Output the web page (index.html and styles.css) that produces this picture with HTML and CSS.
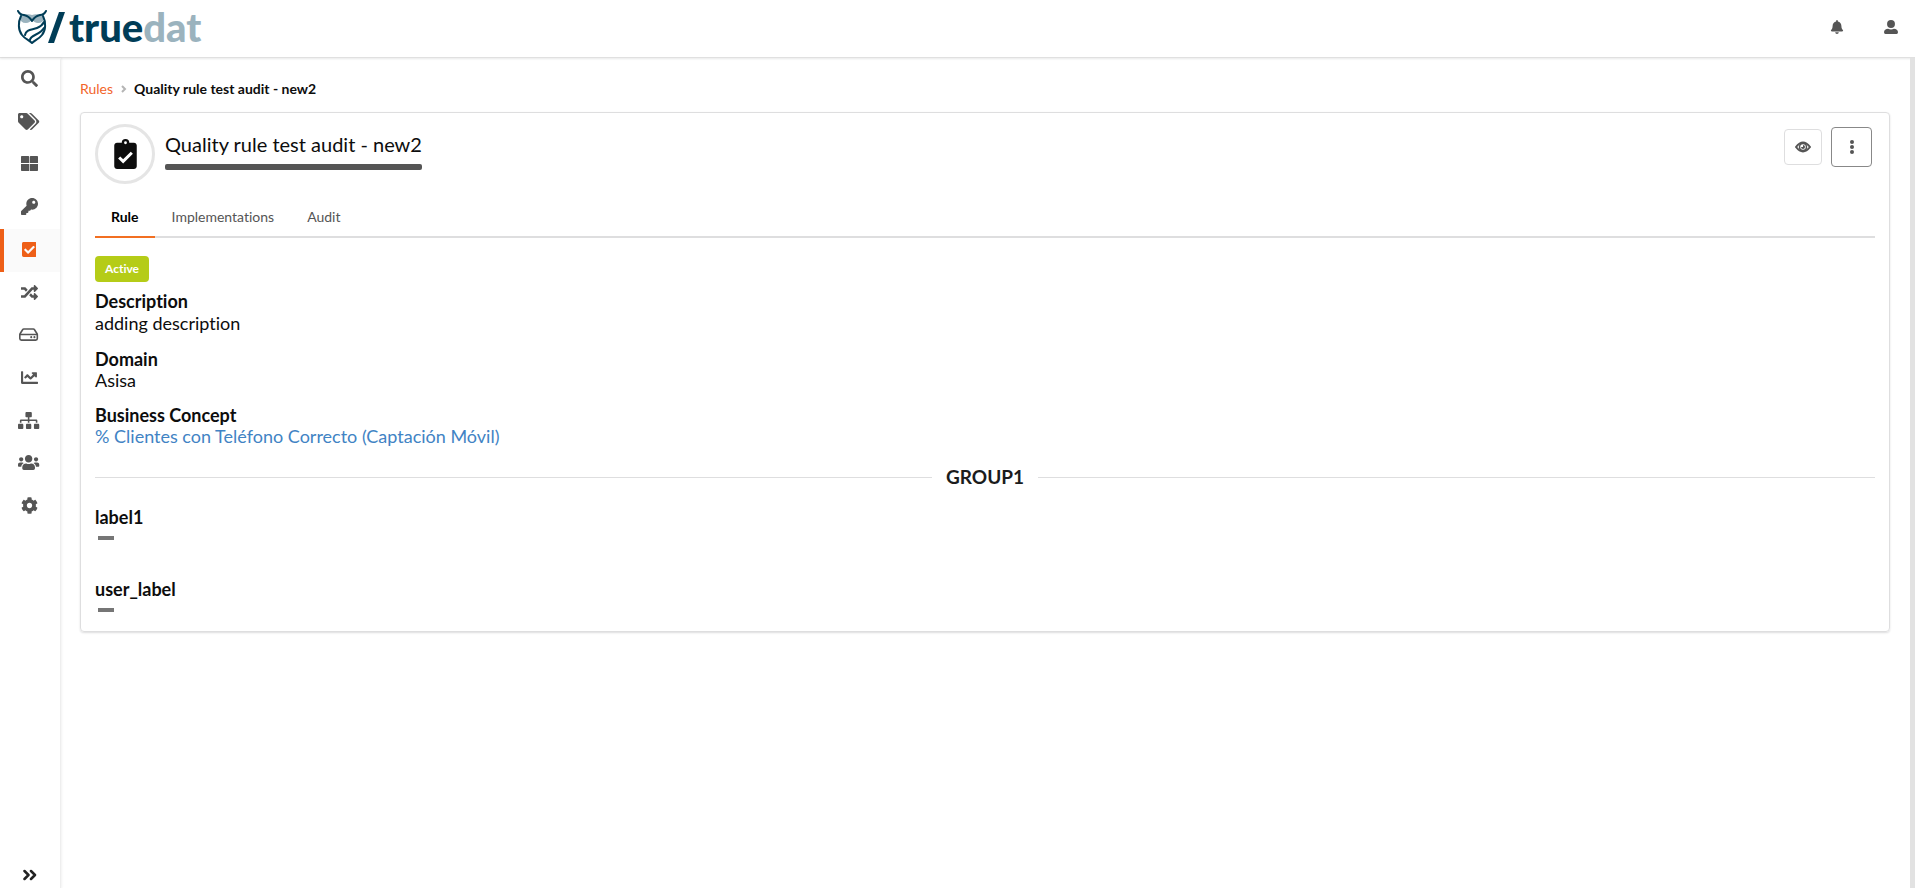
FILE: index.html
```html
<!DOCTYPE html>
<html lang="en">
<head>
    <meta charset="utf-8">
    <title>Quality rule test audit - new2</title>
    <link rel="stylesheet" href="styles.css">
</head>
<body>

<header class="topbar">
  <a class="logo" href="#" aria-label="truedat">
    <svg class="owl" viewBox="0 0 50 36" aria-hidden="true">
      <path d="M4 8Q10 4 16 6Q22 4 28 8Q28 14 22 14Q18 14 16 10Q14 14 10 14Q4 14 4 8Z" fill="#9bb3be"/>
      <g fill="none" stroke="#003d57" stroke-width="2" stroke-linecap="round" stroke-linejoin="round">
        <path d="M2 2Q4 6 8 6Q13 7 16 12Q19 7 24 6Q28 6 30 2"/>
        <path d="M5 7C2 13 2 21 6 26C9 30 13 31 16 34C19 31 23 30 26 26C30 21 30 13 27 7"/>
        <path d="M9 26C10 20 16 21 21 19Q26 17 28 13"/>
        <path d="M14 31C14 26 24 26 28 19"/>
      </g>
      <path d="M43 3h6L38 34h-6z" fill="#003d57"/>
    </svg>
    <span class="word">true<span class="word-light">dat</span></span>
  </a>
  <nav class="user-menu">
    <button type="button" aria-label="Notifications"><svg viewBox="0 0 448 512"><path d="M224 512c35.320 0 63.970-28.650 63.970-64H160.030c0 35.350 28.650 64 63.970 64zm215.390-149.710c-19.320-20.760-55.470-51.990-55.470-154.290 0-77.700-54.480-139.900-127.940-155.160V32c0-17.670-14.320-32-31.980-32s-31.980 14.330-31.980 32v20.840C118.560 68.100 64.080 130.300 64.080 208c0 102.300-36.150 133.530-55.470 154.290-6 6.450-8.660 14.160-8.610 21.710.11 16.400 12.980 32 32.100 32h383.800c19.120 0 32-15.600 32.100-32 .05-7.550-2.610-15.270-8.610-21.710z"/></svg></button>
    <button type="button" aria-label="User"><svg viewBox="0 0 512 512"><circle cx="256" cy="144" r="144"/><path d="M148 320q108 60 216 0c80 0 148 50 148 130q0 62-52 62H52q-52 0-52-62c0-80 68-130 148-130z"/></svg></button>
  </nav>
</header>

<div class="layout">
  <aside class="sidebar">
    <ul class="side-menu">
      <li><a href="#" aria-label="Search"><svg viewBox="0 0 512 512"><path d="M505 442.700L405.300 343c-4.500-4.500-10.600-7-17-7H372c27.600-35.300 44-79.700 44-128C416 93.100 322.900 0 208 0S0 93.100 0 208s93.100 208 208 208c48.300 0 92.700-16.400 128-44v16.300c0 6.400 2.500 12.500 7 17l99.700 99.700c9.400 9.400 24.600 9.400 33.900 0l28.300-28.300c9.400-9.400 9.400-24.600.1-34zM208 336c-70.700 0-128-57.200-128-128 0-70.700 57.200-128 128-128 70.700 0 128 57.200 128 128 0 70.700-57.200 128-128 128z"/></svg></a></li>
      <li><a href="#" aria-label="Concepts"><svg viewBox="0 0 640 512"><path d="M497.941 225.941L286.059 14.059A48 48 0 0 0 252.118 0H48C21.490 0 0 21.490 0 48v204.118a48 48 0 0 0 14.059 33.941l211.882 211.882c18.744 18.745 49.136 18.746 67.882 0l204.118-204.118c18.745-18.745 18.745-49.137 0-67.882zM112 160c-26.510 0-48-21.490-48-48s21.490-48 48-48 48 21.490 48 48-21.490 48-48 48zm513.941 133.823L421.823 497.941c-18.745 18.745-49.137 18.745-67.882 0l-.36-.36L527.640 323.522c16.999-16.999 26.360-39.600 26.360-63.640s-9.362-46.641-26.360-63.640L331.397 0h48.721a48 48 0 0 1 33.941 14.059l211.882 211.882c18.745 18.745 18.745 49.137 0 67.882z"/></svg></a></li>
      <li><a href="#" aria-label="Catalog"><svg viewBox="0 0 512 512"><path d="M24 32h198q24 0 24 24v184H0V56q0-24 24-24zm266 0h198q24 0 24 24v184H266V56q0-24 24-24zM0 272h246v208H24q-24 0-24-24zm266 0h246v184q0 24-24 24H266z"/></svg></a></li>
      <li><a href="#" aria-label="Permissions"><svg viewBox="0 0 512 512"><path d="M512 176.001C512 273.203 433.202 352 336 352c-11.220 0-22.190-1.062-32.827-3.069l-24.012 27.014A23.999 23.999 0 0 1 261.223 384H224v40c0 13.255-10.745 24-24 24h-40v40c0 13.255-10.745 24-24 24H24c-13.255 0-24-10.745-24-24v-78.059c0-6.365 2.529-12.470 7.029-16.971l161.802-161.802C163.108 213.814 160 195.271 160 176 160 78.798 238.797.001 335.999 0 433.488-.001 512 78.511 512 176.001zM336 128c0 26.510 21.490 48 48 48s48-21.490 48-48-21.490-48-48-48-48 21.490-48 48z"/></svg></a></li>
      <li class="active"><a href="#" aria-label="Rules"><svg viewBox="0 0 448 512"><path d="M400 480H48c-26.510 0-48-21.490-48-48V80c0-26.510 21.490-48 48-48h352c26.510 0 48 21.490 48 48v352c0 26.510-21.490 48-48 48zm-204.686-98.059l184-184c6.248-6.248 6.248-16.379 0-22.627l-22.627-22.627c-6.248-6.248-16.379-6.249-22.628 0L184 302.745l-70.059-70.059c-6.248-6.248-16.379-6.248-22.628 0l-22.627 22.627c-6.248 6.248-6.248 16.379 0 22.627l104 104c6.249 6.250 16.379 6.250 22.628.001z"/></svg></a></li>
      <li><a href="#" aria-label="Lineage"><svg viewBox="0 0 512 512"><path d="M504.971 359.029c9.373 9.373 9.373 24.569 0 33.941l-80 79.984c-15.010 15.010-40.971 4.490-40.971-16.971V416h-58.785a12.004 12.004 0 0 1-8.773-3.812l-70.556-75.596 53.333-57.143L352 336h32v-39.981c0-21.438 25.943-31.998 40.971-16.971l80 79.981zM12 176h84l52.781 56.551 53.333-57.143-70.556-75.596A11.999 11.999 0 0 0 122.785 96H12c-6.627 0-12 5.373-12 12v56c0 6.627 5.373 12 12 12zm372 0v39.984c0 21.460 25.961 31.980 40.971 16.971l80-79.984c9.373-9.373 9.373-24.569 0-33.941l-80-79.981C409.943 24.021 384 34.582 384 56.019V96h-58.785a12.004 12.004 0 0 0-8.773 3.812L96 336H12c-6.627 0-12 5.373-12 12v56c0 6.627 5.373 12 12 12h110.785c3.326 0 6.503-1.381 8.773-3.812L352 176h32z"/></svg></a></li>
      <li><a href="#" aria-label="Systems"><svg viewBox="0 0 576 512"><path d="M144 88h288q20 0 30 16l82 128q8 14 8 28v116q0 48-48 48H72q-48 0-48-48V260q0-14 8-28l82-128q10-16 30-16zM40 256h496" fill="none" stroke="currentColor" stroke-width="48"/><circle cx="464" cy="336" r="32"/><circle cx="368" cy="336" r="32"/></svg></a></li>
      <li><a href="#" aria-label="Dashboards"><svg viewBox="0 0 512 512"><path d="M496 384H64V80c0-8.840-7.160-16-16-16H16C7.160 64 0 71.160 0 80v336c0 17.670 14.330 32 32 32h464c8.840 0 16-7.160 16-16v-32c0-8.840-7.160-16-16-16zM464 96H345.940c-21.380 0-32.090 25.850-16.970 40.970l32.400 32.400L288 242.750l-73.370-73.370c-12.500-12.500-32.760-12.500-45.250 0l-68.690 68.690c-6.250 6.250-6.250 16.380 0 22.630l22.620 22.620c6.250 6.250 16.380 6.250 22.630 0L192 237.250l73.370 73.370c12.500 12.500 32.760 12.500 45.250 0l96-96 32.400 32.400c15.120 15.120 40.970 4.410 40.970-16.970V112c.01-8.840-7.150-16-15.990-16z"/></svg></a></li>
      <li><a href="#" aria-label="Structure"><svg viewBox="0 0 640 512"><path d="M128 352H32c-17.670 0-32 14.330-32 32v96c0 17.670 14.330 32 32 32h96c17.670 0 32-14.330 32-32v-96c0-17.670-14.330-32-32-32zm-24-80h192v48h48v-48h192v48h48v-57.590c0-21.170-17.230-38.410-38.410-38.410H344v-64h40c17.670 0 32-14.330 32-32V32c0-17.670-14.330-32-32-32H256c-17.670 0-32 14.330-32 32v96c0 17.670 14.330 32 32 32h40v64H94.410C73.230 224 56 241.230 56 262.410V320h48v-48zm264 80h-96c-17.670 0-32 14.330-32 32v96c0 17.670 14.330 32 32 32h96c17.670 0 32-14.330 32-32v-96c0-17.670-14.330-32-32-32zm240 0h-96c-17.670 0-32 14.330-32 32v96c0 17.670 14.330 32 32 32h96c17.670 0 32-14.330 32-32v-96c0-17.670-14.330-32-32-32z"/></svg></a></li>
      <li><a href="#" aria-label="Users"><svg viewBox="0 0 640 512"><path d="M96 224c35.300 0 64-28.700 64-64s-28.700-64-64-64-64 28.700-64 64 28.700 64 64 64zm448 0c35.300 0 64-28.700 64-64s-28.700-64-64-64-64 28.700-64 64 28.700 64 64 64zm32 32h-64c-17.600 0-33.500 7.100-45.100 18.600 40.300 22.100 68.900 62 75.100 109.400h66c17.700 0 32-14.300 32-32v-32c0-35.300-28.700-64-64-64zm-256 0c61.900 0 112-50.100 112-112S381.900 32 320 32 208 82.100 208 144s50.100 112 112 112zm76.800 32h-8.300c-20.800 10-43.900 16-68.500 16s-47.600-6-68.500-16h-8.300C179.600 288 128 339.600 128 403.200V432c0 26.500 21.500 48 48 48h288c26.500 0 48-21.500 48-48v-28.800c0-63.600-51.600-115.200-115.200-115.200zm-223.700-13.400C161.500 263.100 145.600 256 128 256H64c-35.300 0-64 28.700-64 64v32c0 17.700 14.300 32 32 32h65.900c6.300-47.400 34.900-87.300 75.200-109.400z"/></svg></a></li>
      <li><a href="#" aria-label="Settings"><svg viewBox="0 0 512 512"><path d="M487.400 315.700l-42.600-24.600c4.300-23.200 4.300-47 0-70.200l42.600-24.600c4.900-2.800 7.100-8.600 5.500-14-11.100-35.600-30-67.800-54.700-94.600-3.800-4.100-10-5.100-14.800-2.300L380.800 110c-17.900-15.400-38.500-27.300-60.800-35.100V25.800c0-5.600-3.900-10.500-9.400-11.700-36.700-8.200-74.300-7.800-109.200 0-5.500 1.200-9.400 6.100-9.400 11.700V75c-22.200 7.900-42.800 19.800-60.800 35.100L88.700 85.500c-4.900-2.800-11-1.900-14.800 2.300-24.700 26.700-43.600 58.900-54.700 94.600-1.700 5.400.6 11.200 5.500 14L67.300 221c-4.300 23.200-4.300 47 0 70.200l-42.600 24.600c-4.900 2.800-7.100 8.600-5.500 14 11.100 35.600 30 67.800 54.700 94.600 3.800 4.100 10 5.100 14.800 2.300l42.600-24.600c17.900 15.400 38.500 27.300 60.800 35.100v49.200c0 5.600 3.900 10.500 9.400 11.700 36.700 8.200 74.300 7.800 109.200 0 5.500-1.200 9.400-6.100 9.400-11.700v-49.200c22.200-7.900 42.800-19.800 60.800-35.100l42.600 24.600c4.900 2.800 11 1.900 14.800-2.300 24.700-26.700 43.600-58.900 54.700-94.600 1.500-5.500-.7-11.300-5.600-14.100zM256 336c-44.100 0-80-35.900-80-80s35.900-80 80-80 80 35.900 80 80-35.900 80-80 80z"/></svg></a></li>
    </ul>
    <button type="button" class="expand" aria-label="Expand menu"><svg viewBox="0 0 14 12"><path d="M1.500 2l4 4-4 4M8 2l4 4-4 4" fill="none" stroke="currentColor" stroke-width="2.500" stroke-linecap="round" stroke-linejoin="round"/></svg></button>
  </aside>

  <main class="content">
    <nav class="breadcrumb">
      <a href="#">Rules</a>
      <svg viewBox="0 0 6 8" aria-hidden="true"><path d="M1 1l3 3-3 3" fill="none" stroke="#b5b5b5" stroke-width="2"/></svg>
      <b>Quality rule test audit - new2</b>
    </nav>

    <section class="segment">
      <div class="rule-header">
        <span class="rule-icon"><svg viewBox="0 0 384 512"><path d="M336 64h-80a64 64 0 0 0-128 0H48C22 64 0 86 0 112v352c0 26 22 48 48 48h288c26 0 48-22 48-48V112c0-26-22-48-48-48zM192 40a24 24 0 1 1 0 48 24 24 0 0 1 0-48z"/><path d="M84 315l68 68 148-148" fill="none" stroke="#fff" stroke-width="52"/></svg></span>
        <h1>Quality rule test audit - new2</h1>
        <div class="actions">
          <button type="button" class="watch" aria-label="Subscribe"><svg viewBox="0 0 16 12"><path d="M1 6Q8-3 15 6Q8 15 1 6Z" fill="none" stroke="currentColor" stroke-width="2"/><circle cx="8" cy="6" r="3.500" fill="none" stroke="currentColor" stroke-width="1.500"/><path d="M8 4A2 2 0 1 1 6 6L8 6Z"/></svg></button>
          <button type="button" class="more" aria-label="More actions"><svg viewBox="0 0 4 14"><circle cx="2" cy="2" r="2"/><circle cx="2" cy="7" r="2"/><circle cx="2" cy="12" r="2"/></svg></button>
        </div>
      </div>

      <nav class="tabs">
        <a class="active" href="#">Rule</a>
        <a href="#">Implementations</a>
        <a href="#">Audit</a>
      </nav>

      <span class="label">Active</span>

      <div class="field description">
        <h3>Description</h3>
        <p>adding description</p>
      </div>
      <div class="field">
        <h3>Domain</h3>
        <p>Asisa</p>
      </div>
      <div class="field">
        <h3>Business Concept</h3>
        <p><a href="#">% Clientes con Teléfono Correcto (Captación Móvil)</a></p>
      </div>

      <h4 class="divider">GROUP1</h4>

      <div class="field empty">
        <h3>label1</h3>
        <span class="dash"></span>
      </div>
      <div class="field empty">
        <h3>user_label</h3>
        <span class="dash"></span>
      </div>
    </section>
  </main>
  <div class="scrollbar"></div>
</div>

</body>
</html>
```
FILE: styles.css
```css
* {
    box-sizing: border-box;
}
body {
    margin: 0;
    min-height: 100vh;
    display: flex;
    flex-direction: column;
    font-family: Lato, "Liberation Sans", sans-serif;
    font-size: 14px;
    font-variant-ligatures: none;
    line-height: 20px;
    color: #0d0d0d;
    background: #fff;
}
h1, h3, h4, p, ul {
    margin: 0;
    padding: 0;
}
a {
    text-decoration: none;
}
button {
    display: flex;
    align-items: center;
    justify-content: center;
    padding: 0;
    border: 0;
    background: none;
    color: #555;
    cursor: pointer;
}
svg {
    fill: currentColor;
}

/* top bar */
.topbar {
    display: flex;
    align-items: center;
    justify-content: space-between;
    height: 58px;
    padding: 0 17px 4px 16px;
    border-bottom: 1px solid #e0e0e0;
    box-shadow: 0 1px 2px rgba(34, 36, 38, .1);
}
.logo {
    display: flex;
    align-items: center;
    gap: 3px;
    color: #003d57;
}
.owl {
    width: 50px;
    height: 36px;
}
.word {
    font-size: 40px;
    font-weight: 900;
    line-height: 40px;
}
.word-light {
    color: #9bb3be;
}
.user-menu {
    display: flex;
    gap: 40px;
}
.user-menu svg {
    width: 14px;
    height: 14px;
}

.layout {
    flex: 1;
    display: flex;
}

/* sidebar */
.sidebar {
    display: flex;
    flex-direction: column;
    justify-content: space-between;
    width: 61px;
    border-right: 1px solid #eee;
    box-shadow: 1px 0 2px rgba(34, 36, 38, .06);
}
.side-menu {
    display: flex;
    flex-direction: column;
    height: 470px;
    list-style: none;
}
.side-menu li {
    flex: 1;
    display: flex;
}
.side-menu a {
    flex: 1;
    display: flex;
    align-items: center;
    justify-content: center;
    padding: 0 2px 2px 0;
    color: #555;
}
.side-menu svg {
    height: 17px;
}
.side-menu .active a {
    padding-right: 6px;
    border-left: 4px solid #ee5f17;
    background: #fafafa;
    color: #ee5f17;
}
.expand {
    height: 26px;
    color: #222;
}
.expand svg {
    width: 14px;
    height: 12px;
}

/* content */
.content {
    flex: 1;
    padding: 21px 20px 20px 19px;
}
.breadcrumb {
    display: flex;
    align-items: center;
}
.breadcrumb a {
    color: #f2652a;
}
.breadcrumb svg {
    width: 6px;
    height: 8px;
    margin: 0 7px 0 8px;
}
.segment {
    margin-top: 13px;
    padding: 11px 14px;
    border: 1px solid #dededf;
    border-radius: 4px;
    box-shadow: 0 1px 2px rgba(34, 36, 38, .15);
}
.rule-header {
    display: flex;
    align-items: flex-start;
}
.rule-icon {
    display: flex;
    align-items: center;
    justify-content: center;
    width: 60px;
    height: 60px;
    margin-right: 10px;
    border: 3px solid #e5e5e5;
    border-radius: 50%;
}
.rule-icon svg {
    width: 23px;
    height: 30px;
}
h1 {
    padding-top: 6px;
    font-size: 20px;
    line-height: 28px;
    font-weight: 400;
}
h1:after {
    content: "";
    display: block;
    height: 6px;
    margin-top: 6px;
    border-radius: 2px;
    background: #555;
}
.actions {
    display: flex;
    align-items: center;
    gap: 9px;
    margin: 3px 3px 0 auto;
}
.watch {
    width: 38px;
    height: 36px;
    border: 1px solid #dededf;
    border-radius: 4px;
}
.watch svg {
    width: 16px;
    height: 12px;
}
.more {
    width: 41px;
    height: 40px;
    border: 1px solid #888;
    border-radius: 4px;
}
.more svg {
    width: 4px;
    height: 14px;
}

.tabs {
    display: flex;
    gap: 1px;
    margin-top: 12px;
    border-bottom: 2px solid #dededf;
}
.tabs a {
    margin-bottom: -2px;
    padding: 11px 16px 9px;
    border-bottom: 2px solid transparent;
    color: #555;
}
.tabs .active {
    border-color: #f26f21;
    color: #000;
    font-weight: 700;
}

.label {
    display: inline-block;
    margin: 18px 0 9px;
    padding: 0 10px;
    border-radius: 4px;
    background: #b5cc18;
    color: #fff;
    font-size: 12px;
    line-height: 26px;
    font-weight: 700;
}
.field {
    margin-bottom: 14px;
    font-size: 18px;
    line-height: 21px;
}
.field h3 {
    font-size: 18px;
    font-weight: 700;
}
.description p {
    line-height: 23px;
}
.field a {
    color: #4183c4;
}
.divider {
    display: flex;
    align-items: center;
    gap: 14px;
    margin: 18px 0;
    font-size: 19px;
    line-height: 24px;
    font-weight: 700;
    color: #1b1c1d;
}
.divider:before,
.divider:after {
    content: "";
    flex: 1;
    border-top: 1px solid #dededf;
}
.empty {
    padding-bottom: 17px;
}
.empty:last-child {
    margin: 0;
    padding: 0;
}
.dash {
    display: block;
    width: 16px;
    height: 4px;
    margin: 8px 3px;
    background: #767676;
}
.scrollbar {
    width: 5px;
    background: #e2e2e2;
}
```
